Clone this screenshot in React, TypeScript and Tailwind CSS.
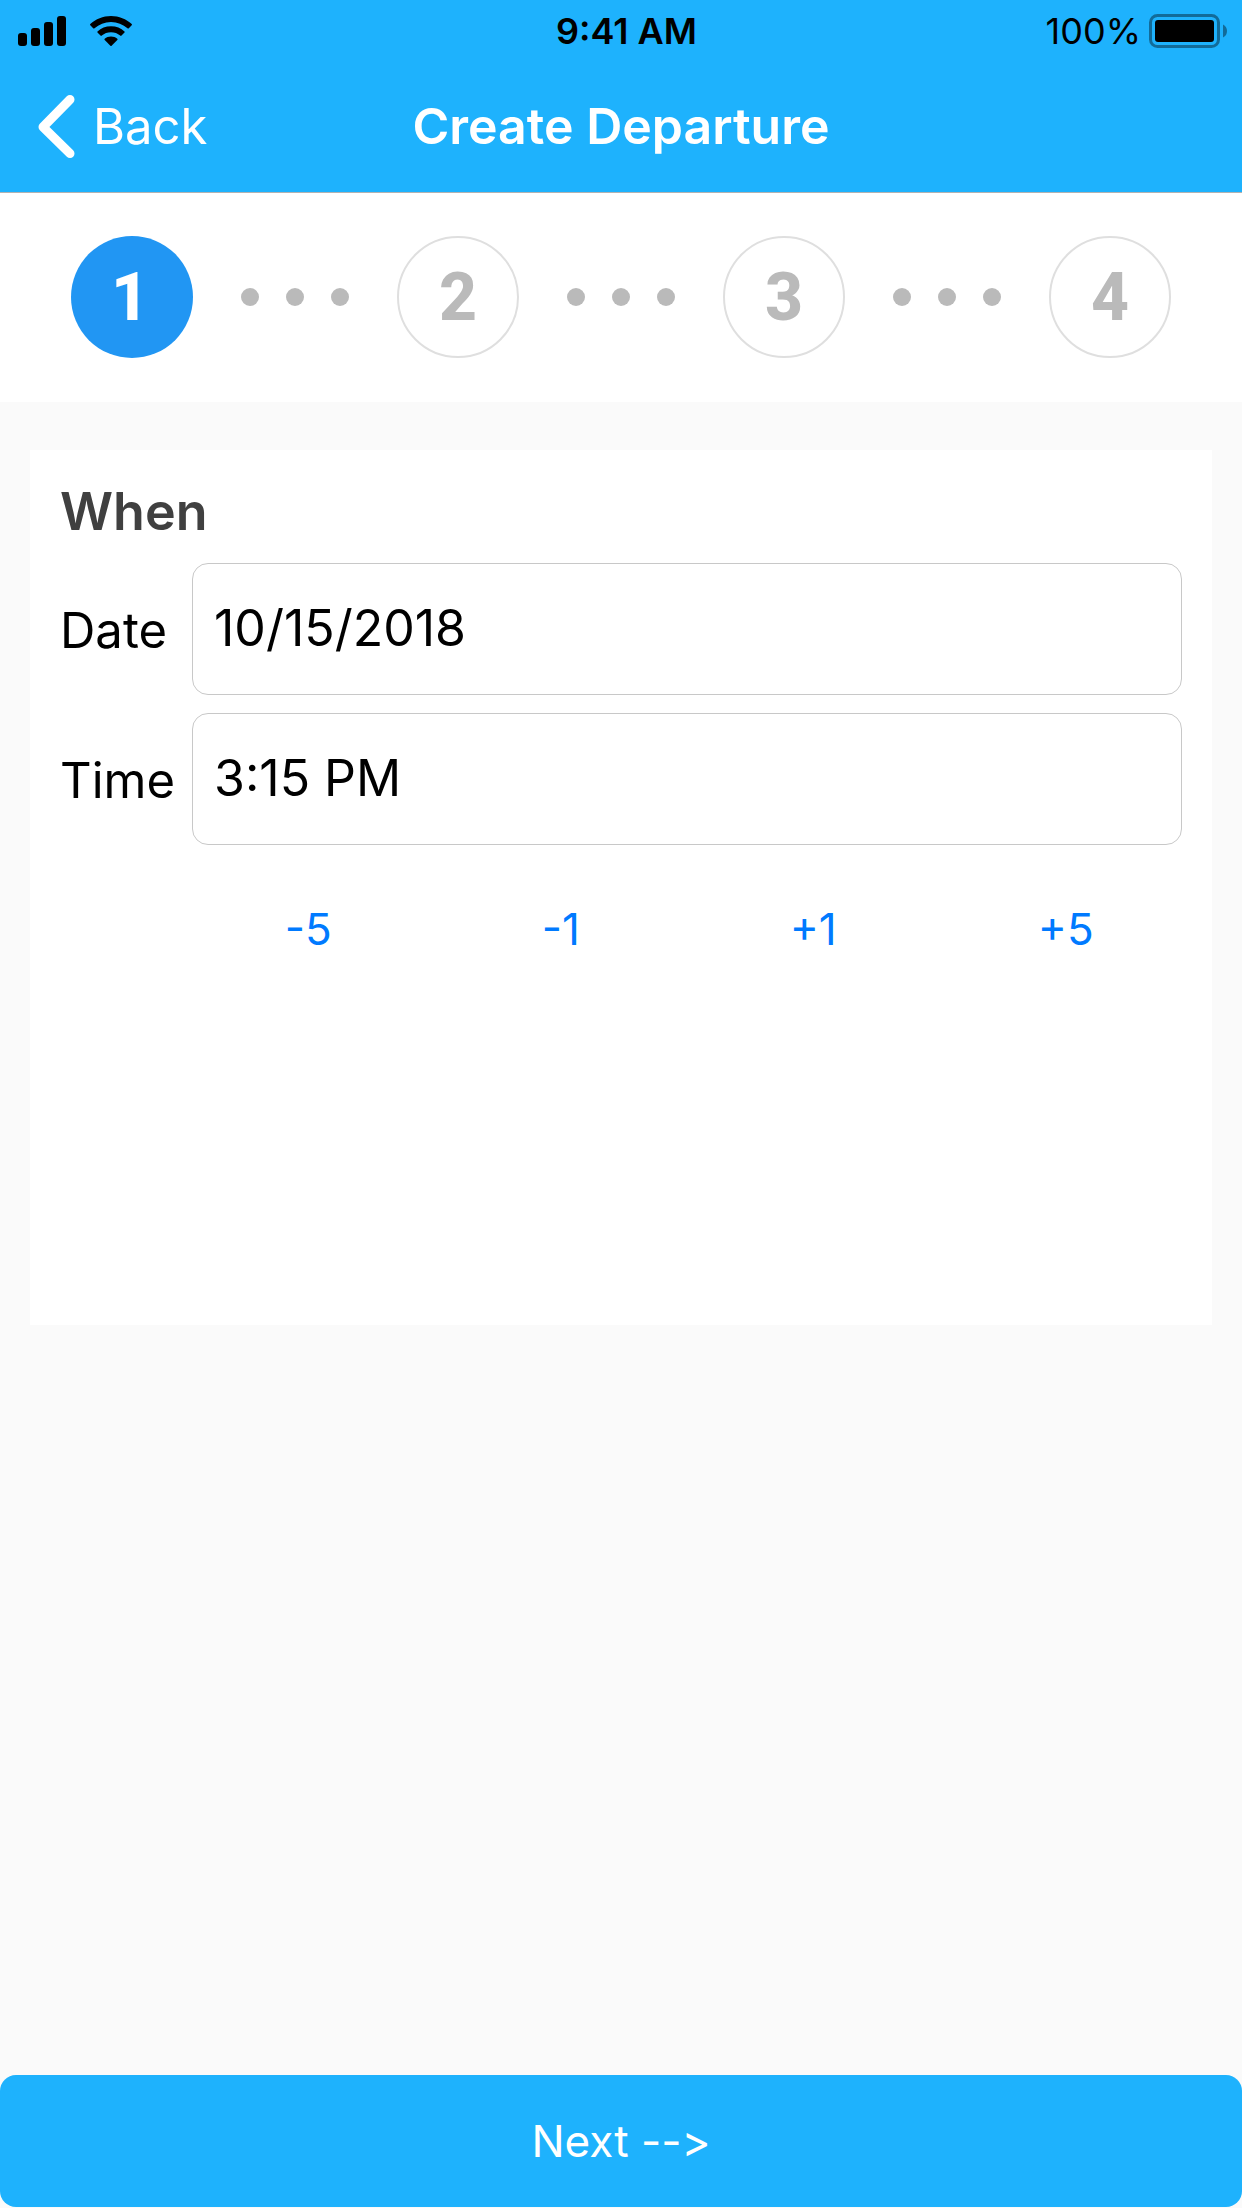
import { Fragment, useState } from "react";

const STEPS = [1, 2, 3, 4];
const ADJUSTMENTS = [-5, -1, 1, 5];

function SignalIcon() {
  return (
    <svg width="48" height="30" viewBox="0 0 48 30" aria-hidden="true">
      <rect x="0" y="17" width="9" height="13" rx="3" />
      <rect x="13" y="12" width="9" height="18" rx="3" />
      <rect x="26" y="6" width="9" height="24" rx="3" />
      <rect x="39" y="0" width="9" height="30" rx="3" />
    </svg>
  );
}

function WifiIcon() {
  return (
    <svg width="42" height="30" viewBox="0 0 42 30" aria-hidden="true">
      <path d="M21 0C13 0 5.700 3 0.300 8.100Q-0.200 8.700 0.300 9.300L3.200 12.300Q3.800 12.900 4.500 12.300C9 8.300 14.700 6 21 6S33 8.300 37.500 12.300Q38.200 12.900 38.800 12.300L41.700 9.300Q42.200 8.700 41.700 8.100C36.300 3 29 0 21 0Z" />
      <path d="M21 10.300C15.700 10.300 11 12.200 7.500 15.400Q7 16 7.500 16.600L10.500 19.600Q11.100 20.200 11.800 19.600C14.300 17.400 17.500 16.200 21 16.200S27.700 17.400 30.200 19.600Q30.900 20.200 31.500 19.600L34.500 16.600Q35 16 34.500 15.400C31 12.200 26.300 10.300 21 10.300Z" />
      <path d="M21 20.600C18.500 20.600 16.400 21.400 14.700 22.800Q14.200 23.400 14.700 24L20.400 29.700Q21 30.200 21.600 29.700L27.300 24Q27.800 23.400 27.300 22.800C25.600 21.400 23.500 20.600 21 20.600Z" />
    </svg>
  );
}

function BatteryIcon() {
  return (
    <svg width="78" height="34" viewBox="0 0 78 34" aria-hidden="true">
      <rect x="1.500" y="1.500" width="68" height="31" rx="7" fill="none" stroke="#126b99" strokeWidth="3" />
      <rect x="6" y="6" width="59" height="22" rx="3" />
      <path d="M74 10.500Q78 12.500 78 17T74 23.500Z" fill="#126b99" />
    </svg>
  );
}

function StatusBar() {
  return (
    <div className="grid h-[62px] grid-cols-[1fr_auto_1fr] items-center pl-[18px] pr-[15px] text-[36px] leading-none text-black">
      <div className="flex items-center gap-6 pb-px">
        <SignalIcon />
        <WifiIcon />
      </div>
      <span className="pl-2 font-semibold">9:41 AM</span>
      <div className="flex items-center justify-end gap-2">
        <span>100%</span>
        <div className="pb-px">
          <BatteryIcon />
        </div>
      </div>
    </div>
  );
}

function Header() {
  return (
    <header className="border-b border-[#b2b2b2] bg-[#1eb2fd] pb-[2px]">
      <StatusBar />
      <nav className="grid h-[128px] grid-cols-[1fr_auto_1fr] items-center px-[38px] text-[50px] leading-none text-white">
        <button type="button" className="flex items-center gap-[18px] justify-self-start text-[49px]">
          <svg width="37" height="64" viewBox="0 0 37 64" fill="none" aria-hidden="true">
            <path d="M32 5.500L5 33L32 59.500" stroke="white" strokeWidth="9" strokeLinecap="round" strokeLinejoin="round" />
          </svg>
          <span>Back</span>
        </button>
        <h1 className="font-semibold">Create Departure</h1>
      </nav>
    </header>
  );
}

function Stepper({ current }: { current: number }) {
  return (
    <div className="flex items-center justify-between bg-white px-[71px] pb-[44px] pt-[43px]">
      {STEPS.map((step) => (
        <Fragment key={step}>
          {step > 1 && (
            <div className="flex gap-[27px]" aria-hidden="true">
              <span className="size-[18px] rounded-full bg-[#bababa]" />
              <span className="size-[18px] rounded-full bg-[#bababa]" />
              <span className="size-[18px] rounded-full bg-[#bababa]" />
            </div>
          )}
          <div
            aria-current={step === current ? "step" : undefined}
            className={
              step === current
                ? "flex size-[122px] items-center justify-center rounded-full bg-[#2196f3] pr-1 pt-[2px] font-['Roboto',sans-serif] text-[66px] font-extrabold leading-none text-white"
                : "flex size-[122px] items-center justify-center rounded-full border-2 border-[#dfdfdf] pt-[2px] font-['Roboto',sans-serif] text-[66px] font-extrabold leading-none text-[#bababa]"
            }
          >
            {step}
          </div>
        </Fragment>
      ))}
    </div>
  );
}

type FieldProps = { id: string; label: string; value: string; onChange: (value: string) => void };

function Field({ id, label, value, onChange }: FieldProps) {
  return (
    <div className="flex items-center text-[50px] leading-none text-black">
      <label htmlFor={id} className="w-[132px] shrink-0 pt-[2px] text-[49px]">
        {label}
      </label>
      <input
        id={id}
        type="text"
        value={value}
        onChange={(event) => onChange(event.target.value)}
        className="h-[132px] min-w-0 flex-1 rounded-[16px] border border-[#c8c8c8] bg-white px-[21px] pb-[3px] outline-none"
      />
    </div>
  );
}

function shiftTime(value: string, delta: number) {
  const match = /^(\d+):(\d+) (AM|PM)$/.exec(value);
  if (!match) return value;
  const start = (Number(match[1]) % 12) * 60 + Number(match[2]) + (match[3] === "PM" ? 720 : 0);
  const total = (start + delta + 1440) % 1440;
  const hours = Math.floor(total / 60);
  const minutes = String(total % 60).padStart(2, "0");
  return `${hours % 12 || 12}:${minutes} ${hours < 12 ? "AM" : "PM"}`;
}

export default function App() {
  const [date, setDate] = useState("10/15/2018");
  const [time, setTime] = useState("3:15 PM");

  return (
    <div className="flex min-h-screen flex-col bg-[#fafafa] font-['Inter',sans-serif]">
      <Header />
      <Stepper current={1} />
      <main className="flex-1 px-[30px] pt-12">
        <section className="min-h-[875px] bg-white px-[30px] py-8">
          <h2 className="text-[52px] font-semibold leading-[60px] text-[#404040]">When</h2>
          <div className="mt-[21px] flex flex-col gap-[18px]">
            <Field id="date" label="Date" value={date} onChange={setDate} />
            <Field id="time" label="Time" value={time} onChange={setTime} />
          </div>
          <div className="-mr-[10px] ml-[122px] mt-[18px] grid grid-cols-4">
            {ADJUSTMENTS.map((delta) => (
              <button
                key={delta}
                type="button"
                onClick={() => setTime(shiftTime(time, delta))}
                className="h-[132px] text-[44px] leading-none text-[#007aff]"
              >
                {delta > 0 ? `+${delta}` : delta}
              </button>
            ))}
          </div>
        </section>
      </main>
      <button type="button" className="mb-px h-[132px] w-full rounded-[16px] bg-[#1eb2fd] text-[44px] leading-none text-white [font-variant-ligatures:none]">
        Next --&gt;
      </button>
    </div>
  );
}
